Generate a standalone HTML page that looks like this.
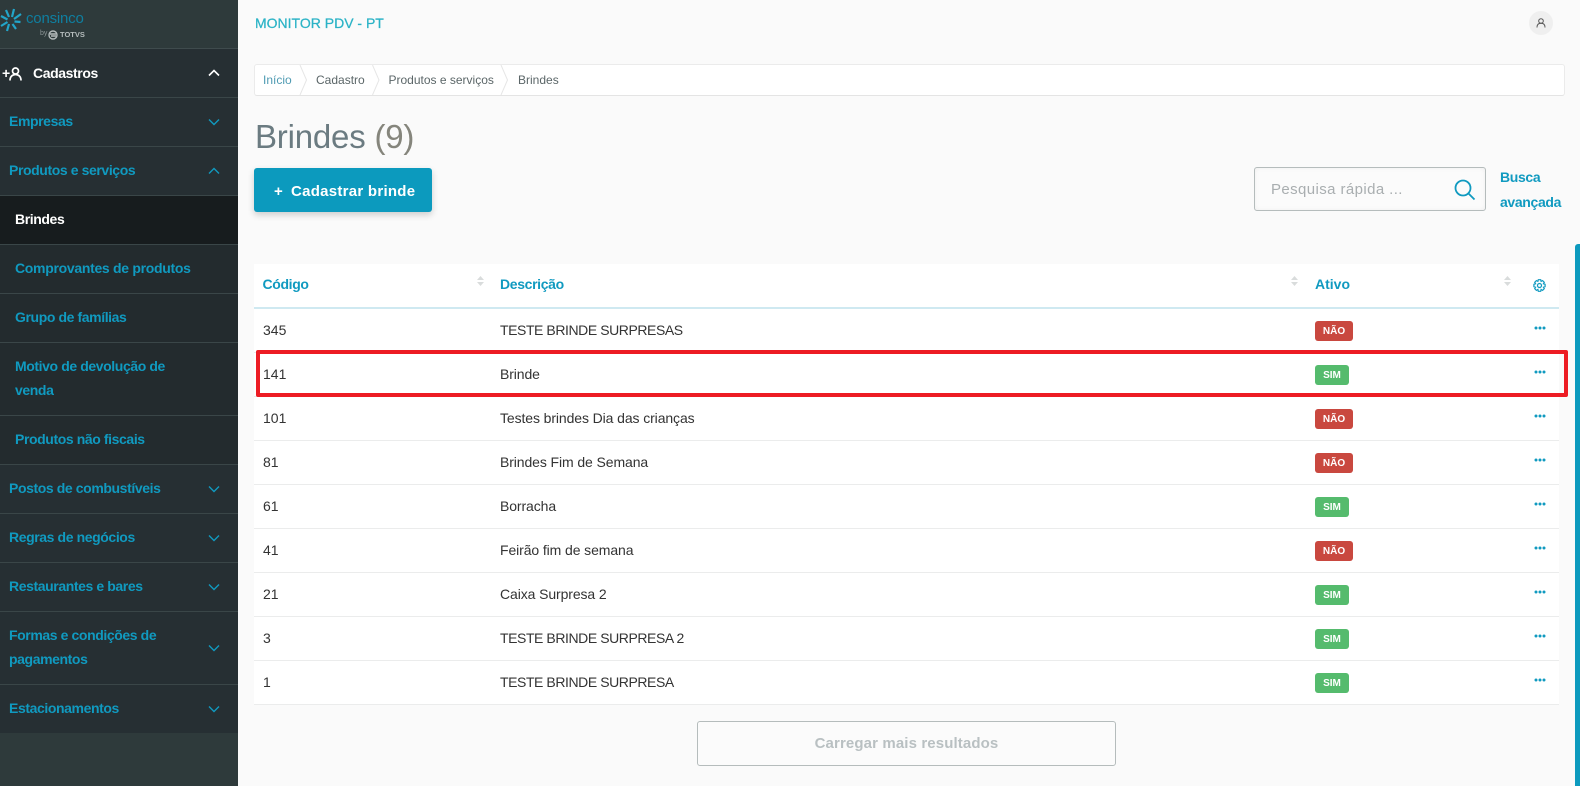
<!DOCTYPE html>
<html lang="pt"><head><meta charset="utf-8"><title>Brindes</title>
<style>
*{box-sizing:border-box}
html,body{margin:0;padding:0;width:1580px;height:786px;overflow:hidden;background:#fafafa;font-family:"Liberation Sans",sans-serif}
.a{position:absolute;white-space:nowrap}
#side{position:absolute;left:0;top:0;width:238px;height:786px;background:#2e3a3b}
.m{position:absolute;left:0;width:238px;background:#262f33;border-bottom:1px solid #3a4648;color:#109ac0;font-weight:bold;font-size:14px;letter-spacing:-.4px;line-height:24px;padding-left:9px;padding-bottom:2px;display:flex;align-items:center}
.m.s{padding-left:15px;background:#232b2e}
.m svg{position:absolute;left:208px;top:50%;margin-top:-4px}
.t{position:absolute;left:254px;width:1305px;background:#fff;height:440px;top:264px}
.r{position:absolute;left:254px;width:1305px;height:44px;border-bottom:1px solid #ebecec;background:#fff;font-size:14px;color:#333}
.r span{position:absolute;top:12px;line-height:18px}
.r .c{left:9px}.r .d{left:246px;letter-spacing:-.1px}
.r .u{letter-spacing:-.43px}
.b{position:absolute;left:1061px;top:12px;height:20px;border-radius:3px;color:#fff;font-weight:bold;font-size:10px;line-height:21px;text-align:center}
.n{width:38px;background:#c9483f}.y{width:34px;background:#55bb6d}
.dots{position:absolute;left:1280px;top:17px}
.th{position:absolute;top:275px;color:#109ac0;font-weight:bold;font-size:14px;line-height:18px;letter-spacing:-.35px}
.bc{position:absolute;top:72px;font-size:12px;line-height:16px;color:#5b6668}
</style></head><body>
<div id="side">
<svg class="a" style="left:0;top:7px" width="22" height="26" viewBox="0 0 22 26" fill="none" stroke="#22a5c9" stroke-width="2.200"><path d="M9 10 6 3M12 10l2-8M14 12l7-5M14.500 14.500l6 .5M12.500 17l3.500 5M9 17l-2 7M7.500 15l-6.500 4M7.500 12.500 1 9"/></svg>
<div class="a" style="left:26px;top:10px;font-size:15px;line-height:18px;color:#0f7fa0;letter-spacing:-.2px">consinco</div>
<div class="a" style="left:40px;top:29px;font-size:7px;line-height:10px;color:#8d9697">by</div>
<svg class="a" style="left:48px;top:30px" width="10" height="10" viewBox="0 0 10 10" fill="none" stroke="#b5bcbc" stroke-width="1.400"><circle cx="5" cy="5" r="4"/><path d="M2 4h6M3 6h5"/></svg>
<div class="a" style="left:60px;top:29px;font-size:7.500px;line-height:11px;font-weight:bold;color:#b5bcbc">TOTVS</div>
<div class="a" style="left:0;top:48px;width:238px;height:1px;background:#3f4b4d"></div>

<div class="m" style="top:49px;height:49px;color:#fff;padding-bottom:0"><span style="margin-left:24px">Cadastros</span><svg width="12" height="8" viewBox="0 0 12 8" fill="none" stroke="#fff" stroke-width="1.600"><path d="M1 6.500 6 1.500l5 5"/></svg></div>
<div class="a" style="left:2px;top:66px;color:#fff;font-weight:bold;font-size:14px;line-height:14px">+</div>
<svg class="a" style="left:9px;top:67px" width="13" height="14" viewBox="0 0 13 14" fill="none" stroke="#fff" stroke-width="1.700"><circle cx="6.500" cy="4" r="3"/><path d="M1 13.500c0-4 2.500-6 5.500-6s5.500 2 5.500 6"/></svg>

<div class="m" style="top:98px;height:49px">Empresas<svg width="12" height="8" viewBox="0 0 12 8" fill="none" stroke="#109ac0" stroke-width="1.400"><path d="M1 1.500 6 6.500l5-5"/></svg></div>
<div class="m" style="top:147px;height:49px">Produtos e serviços<svg width="12" height="8" viewBox="0 0 12 8" fill="none" stroke="#109ac0" stroke-width="1.400"><path d="M1 6.500 6 1.500l5 5"/></svg></div>
<div class="m s" style="top:196px;height:49px;background:#171c1e;color:#fff">Brindes</div>
<div class="m s" style="top:245px;height:49px;letter-spacing:-.3px">Comprovantes de produtos</div>
<div class="m s" style="top:294px;height:49px">Grupo de famílias</div>
<div class="m s" style="top:343px;height:73px">Motivo de devolução de<br>venda</div>
<div class="m s" style="top:416px;height:49px">Produtos não fiscais</div>
<div class="m" style="top:465px;height:49px">Postos de combustíveis<svg width="12" height="8" viewBox="0 0 12 8" fill="none" stroke="#109ac0" stroke-width="1.400"><path d="M1 1.500 6 6.500l5-5"/></svg></div>
<div class="m" style="top:514px;height:49px">Regras de negócios<svg width="12" height="8" viewBox="0 0 12 8" fill="none" stroke="#109ac0" stroke-width="1.400"><path d="M1 1.500 6 6.500l5-5"/></svg></div>
<div class="m" style="top:563px;height:49px">Restaurantes e bares<svg width="12" height="8" viewBox="0 0 12 8" fill="none" stroke="#109ac0" stroke-width="1.400"><path d="M1 1.500 6 6.500l5-5"/></svg></div>
<div class="m" style="top:612px;height:73px">Formas e condições de<br>pagamentos<svg width="12" height="8" viewBox="0 0 12 8" fill="none" stroke="#109ac0" stroke-width="1.400"><path d="M1 1.500 6 6.500l5-5"/></svg></div>
<div class="m" style="top:685px;height:48px;border-bottom:0">Estacionamentos<svg width="12" height="8" viewBox="0 0 12 8" fill="none" stroke="#109ac0" stroke-width="1.400"><path d="M1 1.500 6 6.500l5-5"/></svg></div>
</div>

<div class="a" style="left:255px;top:14px;font-size:14px;line-height:18px;color:#2bb3c6;-webkit-text-stroke:.25px #2bb3c6">MONITOR PDV - PT</div>
<div class="a" style="left:1529px;top:11px;width:24px;height:24px;border-radius:50%;background:#efefef"></div>
<svg class="a" style="left:1536px;top:18px" width="10" height="10" viewBox="0 0 10 10" fill="none" stroke="#555" stroke-width="1"><circle cx="5" cy="3" r="2.300"/><path d="M1 9.500c0-3 1.800-4.200 4-4.200s4 1.200 4 4.200"/></svg>

<div class="a" style="left:254px;top:64px;width:1311px;height:32px;background:#fff;border:1px solid #ebebeb;border-bottom:1px solid #e4e4e4;border-radius:3px"></div>
<svg class="a" style="left:254px;top:65px" width="300" height="30" fill="none" stroke="#e6e6e6"><path d="M46 0l6.500 15L46 30M118.500 0l6.500 15-6.500 15M247 0l6.500 15-6.500 15"/></svg>
<div class="bc" style="left:263px;color:#4f9bb3">Início</div>
<div class="bc" style="left:316px">Cadastro</div>
<div class="bc" style="left:388.500px">Produtos e serviços</div>
<div class="bc" style="left:518px">Brindes</div>

<div class="a" style="left:255px;top:117px;font-size:33px;line-height:40px;color:#6b7b81;letter-spacing:-.2px">Brindes <span style="color:#85857c">(9)</span></div>

<div class="a" style="left:254px;top:168px;width:178px;height:44px;background:#0c9abe;border-radius:3px;box-shadow:0 3px 7px rgba(0,0,0,.18)"></div>
<div class="a" style="left:274px;top:183px;font-size:15px;line-height:18px;font-weight:bold;color:#fff">+</div>
<div class="a" style="left:291px;top:183px;font-size:15px;line-height:18px;font-weight:bold;color:#fff;letter-spacing:.27px">Cadastrar brinde</div>

<div class="a" style="left:1254px;top:167px;width:232px;height:44px;border:1px solid #b5bcbc;border-radius:3px;background:#fbfbfb;box-shadow:inset 0 0 5px rgba(0,0,0,.06)"></div>
<div class="a" style="left:1271px;top:180px;font-size:15px;line-height:20px;color:#a9aeb0;letter-spacing:.4px">Pesquisa rápida ...</div>
<svg class="a" style="left:1454px;top:179px" width="22" height="22" viewBox="0 0 22 22" fill="none" stroke="#109ac0" stroke-width="1.800"><circle cx="9" cy="9" r="7.500"/><path d="M14.500 14.500 20.500 20.500"/></svg>
<div class="a" style="left:1500px;top:168px;font-size:14px;line-height:18px;font-weight:bold;color:#109ac0;letter-spacing:-.35px">Busca</div>
<div class="a" style="left:1500px;top:193px;font-size:14px;line-height:18px;font-weight:bold;color:#109ac0;letter-spacing:-.35px">avançada</div>

<div class="t"></div>
<div class="a" style="left:254px;top:307px;width:1305px;height:2px;background:#cfe9f1"></div>
<div class="th" style="left:262.500px">Código</div>
<div class="th" style="left:500px">Descrição</div>
<div class="th" style="left:1315px;letter-spacing:0">Ativo</div>
<svg class="a" style="left:477px;top:276px" width="7" height="11" fill="#d9dcdc"><path d="M3.500 0 7 4H0zM3.500 10 7 6H0z"/></svg>
<svg class="a" style="left:1291px;top:276px" width="7" height="11" fill="#d9dcdc"><path d="M3.500 0 7 4H0zM3.500 10 7 6H0z"/></svg>
<svg class="a" style="left:1504px;top:276px" width="7" height="11" fill="#d9dcdc"><path d="M3.500 0 7 4H0zM3.500 10 7 6H0z"/></svg>
<svg class="a" style="left:1533px;top:279px" width="13" height="13" viewBox="0 0 13 13" fill="none" stroke="#109ac0" stroke-width="1.200"><circle cx="6.500" cy="6.500" r="2"/><path d="M5.300.7h2.400l.4 1.700 1.500-.8 1.700 1.700-.9 1.500 1.700.5v2.400l-1.700.5.900 1.500-1.700 1.700-1.500-.9-.4 1.800H5.300l-.4-1.800-1.500.9-1.700-1.700.9-1.500L.9 7.700V5.300l1.700-.5-.9-1.500 1.700-1.700 1.500.8z"/></svg>

<div class="r" style="top:309px"><span class="c">345</span><span class="d u">TESTE BRINDE SURPRESAS</span><div class="b n">NÃO</div><svg class="dots" width="12" height="4" fill="#109ac0"><circle cx="2" cy="2" r="1.500"/><circle cx="6" cy="2" r="1.500"/><circle cx="10" cy="2" r="1.500"/></svg></div>
<div class="r" style="top:353px"><span class="c">141</span><span class="d">Brinde</span><div class="b y">SIM</div><svg class="dots" width="12" height="4" fill="#109ac0"><circle cx="2" cy="2" r="1.500"/><circle cx="6" cy="2" r="1.500"/><circle cx="10" cy="2" r="1.500"/></svg></div>
<div class="r" style="top:397px"><span class="c">101</span><span class="d">Testes brindes Dia das crianças</span><div class="b n">NÃO</div><svg class="dots" width="12" height="4" fill="#109ac0"><circle cx="2" cy="2" r="1.500"/><circle cx="6" cy="2" r="1.500"/><circle cx="10" cy="2" r="1.500"/></svg></div>
<div class="r" style="top:441px"><span class="c">81</span><span class="d">Brindes Fim de Semana</span><div class="b n">NÃO</div><svg class="dots" width="12" height="4" fill="#109ac0"><circle cx="2" cy="2" r="1.500"/><circle cx="6" cy="2" r="1.500"/><circle cx="10" cy="2" r="1.500"/></svg></div>
<div class="r" style="top:485px"><span class="c">61</span><span class="d">Borracha</span><div class="b y">SIM</div><svg class="dots" width="12" height="4" fill="#109ac0"><circle cx="2" cy="2" r="1.500"/><circle cx="6" cy="2" r="1.500"/><circle cx="10" cy="2" r="1.500"/></svg></div>
<div class="r" style="top:529px"><span class="c">41</span><span class="d">Feirão fim de semana</span><div class="b n">NÃO</div><svg class="dots" width="12" height="4" fill="#109ac0"><circle cx="2" cy="2" r="1.500"/><circle cx="6" cy="2" r="1.500"/><circle cx="10" cy="2" r="1.500"/></svg></div>
<div class="r" style="top:573px"><span class="c">21</span><span class="d">Caixa Surpresa 2</span><div class="b y">SIM</div><svg class="dots" width="12" height="4" fill="#109ac0"><circle cx="2" cy="2" r="1.500"/><circle cx="6" cy="2" r="1.500"/><circle cx="10" cy="2" r="1.500"/></svg></div>
<div class="r" style="top:617px"><span class="c">3</span><span class="d u">TESTE BRINDE SURPRESA 2</span><div class="b y">SIM</div><svg class="dots" width="12" height="4" fill="#109ac0"><circle cx="2" cy="2" r="1.500"/><circle cx="6" cy="2" r="1.500"/><circle cx="10" cy="2" r="1.500"/></svg></div>
<div class="r" style="top:661px"><span class="c">1</span><span class="d u">TESTE BRINDE SURPRESA</span><div class="b y">SIM</div><svg class="dots" width="12" height="4" fill="#109ac0"><circle cx="2" cy="2" r="1.500"/><circle cx="6" cy="2" r="1.500"/><circle cx="10" cy="2" r="1.500"/></svg></div>

<div class="a" style="left:256px;top:350px;width:1312px;height:47px;border:4px solid #ed1c24;border-radius:2px"></div>

<div class="a" style="left:697px;top:721px;width:419px;height:45px;border:1px solid #b5bcbc;border-radius:3px;background:#fbfbfb;text-align:center;font-size:15px;line-height:44px;font-weight:bold;color:#b9c0c2;letter-spacing:.12px">Carregar mais resultados</div>

<div class="a" style="left:1575px;top:244px;width:5px;height:542px;background:#0c9abe;border-radius:3px 0 0 0"></div>
</body></html>
